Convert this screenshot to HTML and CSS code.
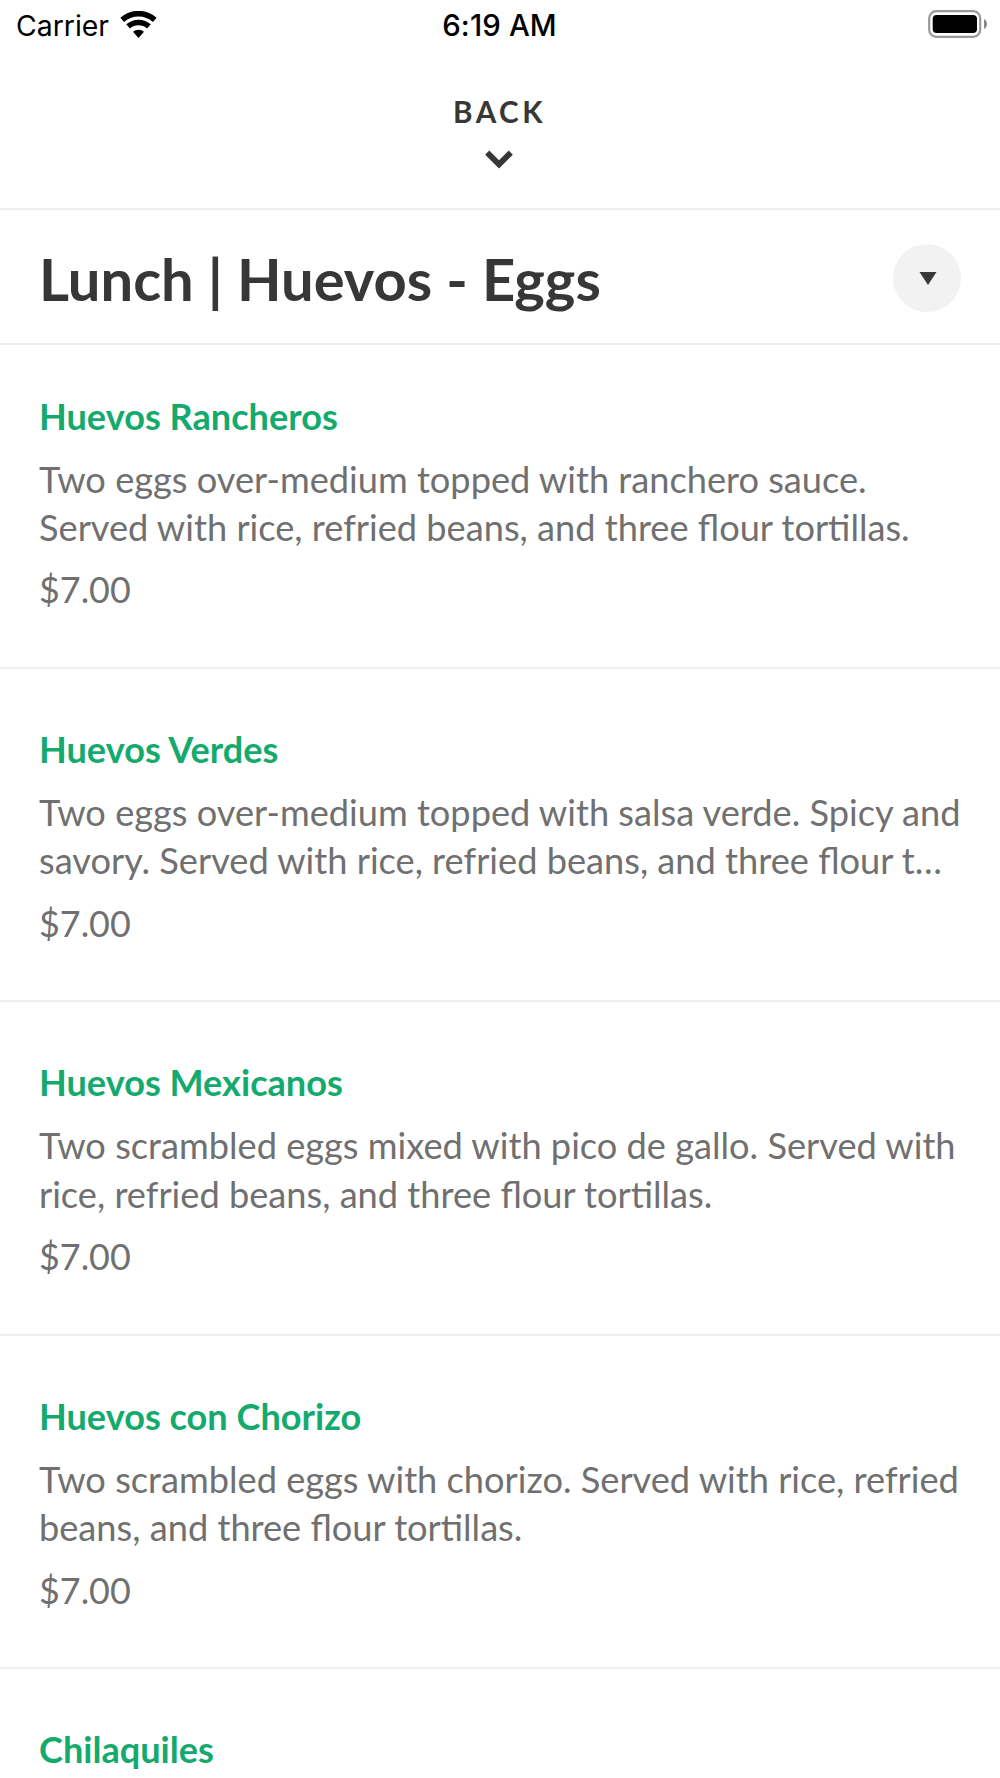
FILE: index.html
```html
<!DOCTYPE html>
<html lang="en">
<head>
<meta charset="utf-8">
<title>Lunch | Huevos - Eggs</title>
<link rel="stylesheet" href="styles.css">
</head>
<body>
<div class="status">
  <div class="carrier"><span>Carrier</span>
    <svg class="wifi" viewBox="0 0 37 27" width="37" height="27"><path d="M2.200 8.900A24.300 24.300 0 0 1 34.800 8.900" fill="none" stroke="#000" stroke-width="5.600"/><path d="M8.100 15.400A15.600 15.600 0 0 1 28.900 15.400" fill="none" stroke="#000" stroke-width="5.600"/><path d="M18.500 27L13 20.800A8.300 8.300 0 0 1 24 20.800Z"/></svg>
  </div>
  <time class="clock">6:19 AM</time>
  <svg class="battery" viewBox="0 0 59 28" width="59" height="28"><rect x="1.200" y="1.200" width="51" height="25.600" rx="7" fill="none" stroke="#999" stroke-width="2.200"/><rect x="4.700" y="5" width="44.300" height="18" rx="4"/><path d="M56 9q3 1.500 3 5t-3 5z" fill="#888"/></svg>
</div>
<header class="back"><span>BACK</span>
  <svg viewBox="0 0 28 19" width="28" height="19"><path d="M2.200 2.600L14 14.300 25.800 2.600" fill="none" stroke="#373737" stroke-width="5.800"/></svg>
</header>
<div class="section"><h1>Lunch | Huevos - Eggs</h1>
  <button class="toggle" aria-label="Choose section"><svg viewBox="0 0 18 13" width="18" height="13"><path d="M0.500 0H17.500L9 13Z" fill="#373737"/></svg></button>
</div>
<main>
  <article><h2>Huevos Rancheros</h2><p>Two eggs over-medium topped with ranchero sauce.<br>Served with rice, refried beans, and three flour tortillas.</p><div class="price">$7.00</div></article>
  <article><h2>Huevos Verdes</h2><p>Two eggs over-medium topped with salsa verde. Spicy and<br>savory. Served with rice, refried beans, and three flour t…</p><div class="price">$7.00</div></article>
  <article><h2>Huevos Mexicanos</h2><p>Two scrambled eggs mixed with pico de gallo. Served with<br>rice, refried beans, and three flour tortillas.</p><div class="price">$7.00</div></article>
  <article><h2>Huevos con Chorizo</h2><p>Two scrambled eggs with chorizo. Served with rice, refried<br>beans, and three flour tortillas.</p><div class="price">$7.00</div></article>
  <article><h2>Chilaquiles</h2></article>
</main>
</body>
</html>
```

FILE: styles.css
```css
* { box-sizing: border-box; }
body { margin: 0; height: 1778px; overflow: hidden; background: #fff; color: #373737; font-family: Lato, sans-serif; }
.status { height: 50px; padding: 0 13px 0 16px; display: grid; grid-template-columns: 1fr auto 1fr; align-items: center; color: #000; font: 28.400px/50px Inter, sans-serif; }
.status span, .clock { padding-top: 1px; }
.carrier { display: flex; align-items: center; gap: 11px; }
.wifi { margin-bottom: 3px; }
.clock { margin-right: 4px; font-size: 29.400px; font-weight: 500; letter-spacing: 0.150px; }
.battery { justify-self: end; margin-bottom: 3px; }
.back { height: 160px; padding: 44px 3px 0 0; border-bottom: 2px solid #eee; display: flex; flex-direction: column; align-items: center; font-size: 29.600px; line-height: 36px; font-weight: 700; letter-spacing: 3.500px; }
.back span { margin-left: 2px; }
.back svg { margin-top: 20px; }
.section { height: 135px; padding: 2px 38.700px 0 39px; border-bottom: 2px solid #eee; display: flex; align-items: center; justify-content: space-between; }
h1 { margin: 2px 0 0; font-size: 57.900px; line-height: 72px; font-weight: 700; white-space: nowrap; }
.toggle { width: 68px; height: 68px; border: 0; padding: 2px 0 0 2px; border-radius: 50%; background: #f2f2f2; display: flex; align-items: center; justify-content: center; }
article { height: 333.400px; padding: 58px 39px 0; border-bottom: 2px solid #eee; }
article:first-child { height: 324px; padding-top: 48.600px; }
article:last-child { height: 109px; border-bottom: 0; }
h2 { margin: 0; font-size: 36.120px; line-height: 44px; font-weight: 700; color: #15aa6d; }
p { margin: 17px 0 0; font-size: 36.200px; line-height: 48.300px; color: #707070; white-space: nowrap; }
.price { margin-top: 15.200px; font-size: 35.900px; line-height: 48px; color: #707070; }
```
